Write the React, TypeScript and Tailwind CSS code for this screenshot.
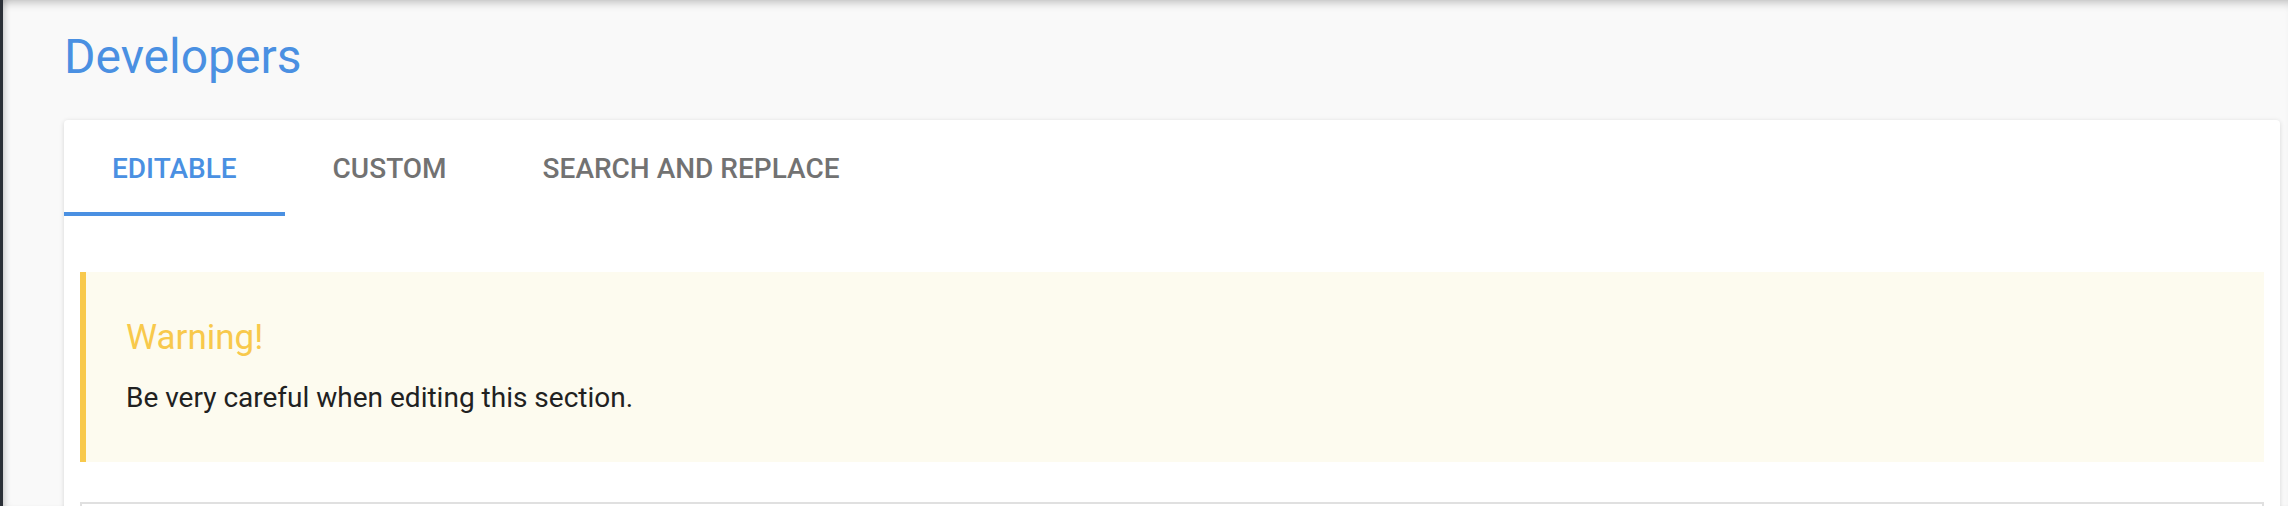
import React, { useState } from "react";

const tabs = ["EDITABLE", "CUSTOM", "SEARCH AND REPLACE"];

export default function App() {
  const [active, setActive] = useState(0);

  return (
    <div
      className="flex h-[506px] overflow-hidden bg-[#f9f9f9]"
      style={{ fontFamily: "Roboto, 'Noto Sans', sans-serif" }}
    >
      {/* sidebar edge */}
      <div className="w-[3px] shrink-0 bg-[#2b3037]" />

      <main className="flex-1 pl-[61px] pr-2 pt-[29px] shadow-[inset_0_9px_8px_-6px_rgba(0,0,0,0.22),inset_6px_0_6px_-4px_rgba(0,0,0,0.18)]">
        {/* Title */}
        <h1 className="text-[48px] leading-[56px] font-normal text-[#4a90e2]">Developers</h1>

        {/* Card */}
        <div className="mt-[35px] rounded-[4px] bg-white shadow-[0_1px_5px_rgba(0,0,0,0.14)]">
          {/* Tabs */}
          <div className="flex h-[96px]">
            {tabs.map((t, i) => (
              <button
                key={t}
                onClick={() => setActive(i)}
                className={
                  "flex items-center px-[48px] pt-[5px] text-[28px] font-medium border-b-4 " +
                  (i === active
                    ? "text-[#4a90e2] border-[#4a90e2]"
                    : "text-[#727272] border-transparent")
                }
              >
                {t}
              </button>
            ))}
          </div>

          <div className="px-4 pt-[56px]">
            {/* Warning */}
            <div className="border-l-[6px] border-[#f8c94c] bg-[#fdfbef] pl-[40px] pt-[45px] pb-[44px]">
              <h3 className="text-[35px] leading-[42px] font-normal text-[#f8c94c]">Warning!</h3>
              <p className="mt-[19px] text-[28px] leading-[40px] text-[#212121]">
                Be very careful when editing this section.
              </p>
            </div>

            {/* Editor */}
            <div className="mt-[40px] h-[300px] border-2 border-[#e0e0e0] bg-white" />
          </div>
        </div>
      </main>
    </div>
  );
}
